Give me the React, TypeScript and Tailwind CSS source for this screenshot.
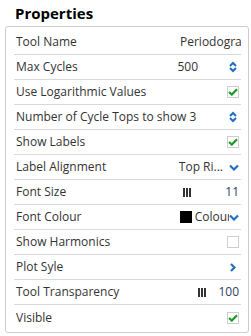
import React from "react";

const BLUE = "#1f6fc0";

function Spinner() {
  return (
    <svg width="8" height="12" viewBox="0 0 8 12" className="shrink-0">
      <path d="M1 5 L4 2 L7 5" fill="none" stroke={BLUE} strokeWidth="2" />
      <path d="M1 7 L4 10 L7 7" fill="none" stroke={BLUE} strokeWidth="2" />
    </svg>
  );
}

function ChevronDown() {
  return (
    <svg width="10" height="7" viewBox="0 0 10 7" className="shrink-0">
      <path d="M1 1.5 L5 5.5 L9 1.5" fill="none" stroke={BLUE} strokeWidth="2.2" />
    </svg>
  );
}

function ChevronRight() {
  return (
    <svg width="6" height="9" viewBox="0 0 6 9" className="shrink-0">
      <path d="M1 1 L4.5 4.5 L1 8" fill="none" stroke={BLUE} strokeWidth="2.2" />
    </svg>
  );
}

function Check({ on }: { on: boolean }) {
  return (
    <div className="flex h-[12px] w-[12px] shrink-0 items-center justify-center border border-[#cfcfcf] bg-white">
      {on && (
        <svg width="10" height="8" viewBox="0 0 10 8">
          <path d="M1 4 L3.8 6.6 L9 1.2" fill="none" stroke="#1d9a2a" strokeWidth="2.2" />
        </svg>
      )}
    </div>
  );
}

function Bars() {
  return (
    <div className="flex h-[9px] gap-[1px]">
      <div className="w-[2px] bg-[#333]" />
      <div className="w-[2px] bg-[#333]" />
      <div className="w-[2px] bg-[#333]" />
    </div>
  );
}

function Row({ label, children, last }: { label: string; children?: React.ReactNode; last?: boolean }) {
  return (
    <div
      className={`flex h-[25px] items-center pl-[2px] ${last ? "" : "border-b border-[#d9d9d9]"}`}
    >
      <span className="shrink-0 whitespace-nowrap text-[12px] text-[#333]">{label}</span>
      <div className="ml-auto flex items-center overflow-hidden">{children}</div>
    </div>
  );
}

export default function App() {
  return (
    <div className="h-[336px] w-[251px] bg-white font-['Open_Sans',sans-serif]">
      <div className="h-[26px] pl-[15px] pt-[2px] text-[15px] font-bold leading-[22px] text-black">
        Properties
      </div>
      <div className="ml-[5px] w-[244px] rounded-[3px] border border-[#cccccc] pb-[2px] pl-[8px] pr-[7px] pt-[3px]">
        <Row label="Tool Name">
          <span className="w-[61px] overflow-hidden whitespace-nowrap text-[12px] text-[#333]">
            Periodogram
          </span>
        </Row>
        <Row label="Max Cycles">
          <span className="mr-[31px] text-[12px] text-[#333]">500</span>
          <span className="mr-[4px]"><Spinner /></span>
        </Row>
        <Row label="Use Logarithmic Values">
          <span className="mr-[2px]"><Check on /></span>
        </Row>
        <Row label="Number of Cycle Tops to show 3">
          <span className="mr-[4px]"><Spinner /></span>
        </Row>
        <Row label="Show Labels">
          <span className="mr-[2px]"><Check on /></span>
        </Row>
        <Row label="Label Alignment">
          <span className="mr-[6px] text-[12px] text-[#333]">Top Ri...</span>
          <span className="mr-[2px]"><ChevronDown /></span>
        </Row>
        <Row label="Font Size">
          <span className="mr-[34px]"><Bars /></span>
          <span className="mr-[2px] text-[12px] text-[#2a3f66]">11</span>
        </Row>
        <Row label="Font Colour">
          <span className="mr-[3px] h-[12px] w-[12px] bg-black" />
          <span className="whitespace-nowrap text-[12px] text-[#333]">Colour</span>
          <span className="relative -ml-[3px] mr-[2px] bg-white"><ChevronDown /></span>
        </Row>
        <Row label="Show Harmonics">
          <span className="mr-[2px]"><Check on={false} /></span>
        </Row>
        <Row label="Plot Syle">
          <span className="mr-[5px]"><ChevronRight /></span>
        </Row>
        <Row label="Tool Transparency">
          <span className="mr-[12px]"><Bars /></span>
          <span className="mr-[2px] text-[12px] text-[#2a3f66]">100</span>
        </Row>
        <Row label="Visible" last>
          <span className="mr-[2px]"><Check on /></span>
        </Row>
      </div>
    </div>
  );
}
